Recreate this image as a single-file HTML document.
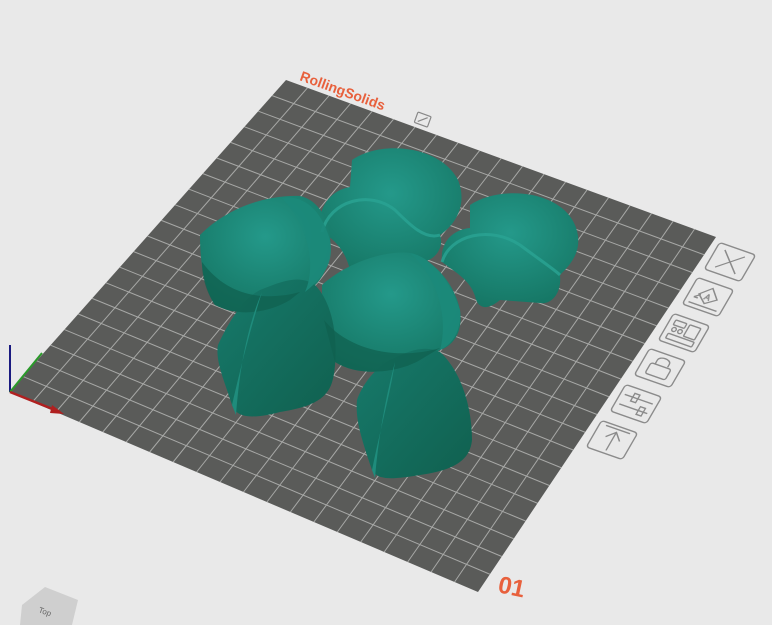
<!DOCTYPE html>
<html><head><meta charset="utf-8"><style>
html,body{margin:0;padding:0;background:#e9e9e9;overflow:hidden}
svg{display:block}
</style></head><body>
<svg id="s" width="772" height="625" viewBox="0 0 772 625">
<rect width="772" height="625" fill="#e9e9e9"/>
<polygon points="286,80 716,237 478,592 9,392" fill="#5a5b59"/>
<g id="grid" stroke="#b0b1af" stroke-width="1" opacity="0.9"></g>
<text x="0" y="0" transform="translate(299,80) rotate(20)" font-family="Liberation Sans, sans-serif" font-weight="bold" font-size="14" fill="#e8603c">RollingSolids</text>
<g transform="translate(418,112) rotate(20)" fill="none" stroke="#888" stroke-width="1.2"><rect x="0" y="0" width="14" height="11" rx="1"/><path d="M3 9 L11 2"/></g>
<text transform="translate(497,592) rotate(12)" font-family="Liberation Sans, sans-serif" font-weight="bold" font-size="24" fill="#e8603c">01</text>
<path d="M10 392 L10 345" stroke="#1a1a80" stroke-width="2"/>
<path d="M10 392 L42 353" stroke="#2a9a2a" stroke-width="2"/>
<path d="M10 392 L60 412" stroke="#b02020" stroke-width="2.5"/>
<polygon points="52,405 64,414 50,413" fill="#b02020"/>
<polygon points="22,605 45,587 78,600 72,625 20,625" fill="#cfcfcf"/>
<text transform="translate(38,612) rotate(20)" font-family="Liberation Sans, sans-serif" font-size="8" fill="#666">Top</text>
<defs>
<radialGradient id="g1" cx="0.5" cy="0.35" r="0.7"><stop offset="0" stop-color="#24998a"/><stop offset="1" stop-color="#157563"/></radialGradient>
<linearGradient id="g2" x1="0" y1="0" x2="1" y2="1"><stop offset="0" stop-color="#177a6b"/><stop offset="1" stop-color="#10604f"/></linearGradient>
</defs>
<g fill="url(#g1)">
<path d="M352 160 C380 140 440 145 458 180 C468 205 455 225 440 235 C445 250 432 262 420 262 L380 265 C365 280 355 282 350 270 C345 250 335 240 322 232 C315 210 330 190 350 187 Z"/>
<path d="M470 205 C500 185 560 190 575 225 C585 250 570 265 560 275 C562 295 550 305 540 303 L500 300 C488 310 478 310 475 296 C470 280 455 272 442 262 C440 245 450 230 470 228 Z"/>
<path d="M200 235 C230 205 270 195 300 196 C320 200 333 225 330 250 C328 270 320 285 305 292 L290 300 C270 312 240 318 215 305 C205 290 200 265 200 235 Z"/>
<path d="M322 285 C350 260 390 250 410 253 C435 260 455 285 460 310 C463 330 455 345 440 350 L420 360 C400 372 360 378 335 362 C325 345 322 320 322 285 Z"/>
</g>
<g fill="url(#g2)">
<path d="M260 290 C285 280 300 275 315 285 C330 300 338 330 335 365 C333 392 325 405 280 412 C250 420 236 417 232 405 C224 380 215 360 218 345 C225 330 240 300 260 290 Z"/>
<path d="M390 360 C410 350 425 345 440 352 C460 370 472 405 472 440 C470 460 455 470 420 475 C390 480 378 480 372 470 C362 440 355 420 357 400 C362 385 375 368 390 360 Z"/>
</g>
<g fill="#10604f" opacity="0.7">
<path d="M202 262 C230 300 270 300 300 292 L290 300 C270 312 240 318 215 305 C205 290 202 275 202 262 Z"/>
<path d="M324 320 C350 352 400 360 440 348 L420 360 C400 372 360 378 335 362 Z"/>
</g>
<g fill="#1f8c7c">
<path d="M232 405 C240 370 250 330 262 292 C250 320 240 360 236 415 Z"/>
<path d="M372 470 C380 430 390 395 395 362 C385 400 378 440 375 478 Z"/>
</g>
<g fill="none" stroke="#2aa494" stroke-width="3" opacity="0.8">
<path d="M322 232 C330 200 370 190 395 210 C410 225 425 240 440 235"/>
<path d="M442 262 C450 235 490 225 520 245 C540 260 555 270 560 275"/>
</g>
<g fill="#1c8a7a" opacity="0.9">
<path d="M282 198 C300 195 320 205 330 240 C335 265 320 280 305 292 C315 270 312 230 282 198 Z"/>
<path d="M410 253 C430 256 450 280 460 310 C462 330 452 345 440 350 C448 320 440 280 410 253 Z"/>
</g>
<g id="icons" fill="none" stroke="#8b8b8b" stroke-width="1.3"></g>
</svg>
<script>
(function(){
var P=[[9,392],[478,592],[716,237],[286,80]];
function lerp(a,b,t){return [a[0]+(b[0]-a[0])*t,a[1]+(b[1]-a[1])*t];}
var g=document.getElementById('grid'),s='',N=20;
for(var i=1;i<N;i++){var t=i/N;
 var a=lerp(P[0],P[1],t),b=lerp(P[3],P[2],t);
 s+='<line x1="'+a[0]+'" y1="'+a[1]+'" x2="'+b[0]+'" y2="'+b[1]+'"/>';
 a=lerp(P[0],P[3],t);b=lerp(P[1],P[2],t);
 s+='<line x1="'+a[0]+'" y1="'+a[1]+'" x2="'+b[0]+'" y2="'+b[1]+'"/>';}
g.innerHTML=s;
var c=[[730,262],[708,297],[684,333],[660,368],[636,404],[612,440]];
var inner=[
 '<path d="M-10 -9 L10 9 M10 -9 L-10 9"/>',
 '<path d="M0 -9 L9 0 L0 7 L-9 0 Z M-12 4 L-7 0 M-12 4 L-8 4 M-14 10 L14 10"/><text x="-3" y="3" font-size="8" stroke-width="0.6" font-family="Liberation Sans">A</text>',
 '<rect x="-13" y="-9" width="11" height="5" rx="1"/><rect x="1" y="-9" width="11" height="12" rx="1"/><circle cx="-10" cy="0" r="2"/><circle cx="-4" cy="0" r="2"/><rect x="-13" y="5" width="26" height="5" rx="1"/>',
 '<path d="M-6 -2 L-6 -6 C-6 -11 6 -11 6 -6 L6 -3"/><rect x="-10" y="-2" width="20" height="11" rx="2"/>',
 '<path d="M-14 -5 L14 -5 M-14 5 L14 5"/><rect x="-6" y="-9" width="5" height="8"/><rect x="5" y="1" width="5" height="8"/>',
 '<path d="M0 11 L0 -8 M-7 -1 L0 -8 L7 -1 M-12 -11 L12 -11"/>'];
var h='';
for(var k=0;k<6;k++){h+='<g transform="translate('+c[k][0]+','+c[k][1]+') matrix(1,0.35,-0.55,0.95,0,0)"><rect x="-18" y="-14" width="36" height="28" rx="3"/>'+inner[k]+'</g>';}
document.getElementById('icons').innerHTML=h;
})();
</script>
</body></html>
